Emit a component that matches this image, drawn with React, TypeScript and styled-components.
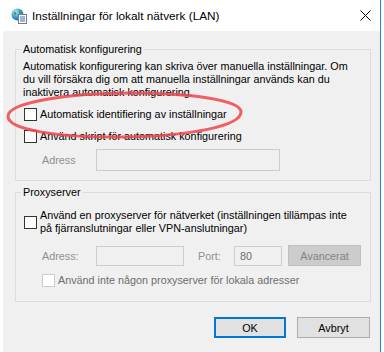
import React from "react";
import styled, { createGlobalStyle } from "styled-components";

const Global = createGlobalStyle`
  html, body { margin: 0; padding: 0; background: #ffffff; }
  body { font-family: "Liberation Sans", Arial, sans-serif; font-size: 10.8px; color: #000; }
  #root { width: 384px; height: 352px; overflow: hidden; }
`;

const Page = styled.div`
  position: relative;
  width: 384px;
  height: 352px;
`;

const Window = styled.div`
  margin-left: 3px;
  width: 377px;
  height: 352px;
  border-right: 1px solid #2f7fd6;
  display: flex;
  flex-direction: column;
`;

const TitleBar = styled.div`
  height: 31px;
  flex: none;
  background: #ffffff;
  display: flex;
  align-items: center;
  margin-left: -3px;
  padding-left: 11px;
  padding-right: 9px;
`;

const TitleText = styled.span`
  margin-left: 5px;
  font-size: 11.8px;
  color: #000;
  flex: 1;
  white-space: nowrap;
`;

const CloseBox = styled.div`
  width: 12px;
  height: 12px;
  display: flex;
  align-items: center;
  justify-content: center;
`;

const Body = styled.div`
  flex: 1;
  background: #f0f0f0;
  padding-top: 10px;
  display: flex;
  flex-direction: column;
`;

const Group = styled.fieldset<{ $top?: number; $bottom: number }>`
  margin: ${(p) => p.$top ?? 0}px 9px 0 12px;
  padding: 0 7px ${(p) => p.$bottom}px 7px;
  border: 1px solid #dcdcdc;
  min-width: 0;
`;

const Legend = styled.legend`
  padding: 0 2px;
  margin-left: -2px;
  line-height: 16px;
`;

const Desc = styled.div`
  margin-top: 3px;
  line-height: 13px;
  white-space: nowrap;
`;

const Line = styled.div``;

const CheckRow = styled.div<{ $indent?: number; $mt?: number; $disabled?: boolean }>`
  display: flex;
  align-items: center;
  min-height: 22px;
  margin-top: ${(p) => p.$mt ?? 0}px;
  padding-left: ${(p) => p.$indent ?? 1}px;
  color: ${(p) => (p.$disabled ? "#6d6d6d" : "#000")};
`;

const Box = styled.span<{ $disabled?: boolean }>`
  flex: none;
  box-sizing: border-box;
  width: 13px;
  height: 13px;
  background: #ffffff;
  border: 1px solid ${(p) => (p.$disabled ? "#cccccc" : "#333333")};
  margin-right: 3px;
`;

const Label = styled.span`
  line-height: 13px;
  white-space: nowrap;
`;

const FieldRow = styled.div<{ $mt: number }>`
  display: flex;
  align-items: center;
  margin-top: ${(p) => p.$mt}px;
`;

const FieldLabel = styled.span<{ $w: number; $ml?: number }>`
  width: ${(p) => p.$w}px;
  margin-left: ${(p) => p.$ml ?? 0}px;
  color: #8f8f8f;
  white-space: nowrap;
`;

const Input = styled.div<{ $w: number; $h: number }>`
  box-sizing: border-box;
  width: ${(p) => p.$w}px;
  height: ${(p) => p.$h}px;
  border: 1px solid #cccccc;
  background: #f0f0f0;
  color: #6d6d6d;
  padding-left: 5px;
  display: flex;
  align-items: center;
`;

const Button = styled.div<{ $w: number; $primary?: boolean; $disabled?: boolean; $ml?: number }>`
  box-sizing: border-box;
  width: ${(p) => p.$w}px;
  height: 21px;
  margin-left: ${(p) => p.$ml ?? 0}px;
  display: flex;
  align-items: center;
  justify-content: center;
  background: ${(p) => (p.$disabled ? "#cccccc" : "#e1e1e1")};
  border: ${(p) =>
    p.$primary ? "2px solid #0078d7" : p.$disabled ? "1px solid #bfbfbf" : "1px solid #adadad"};
  color: ${(p) => (p.$disabled ? "#838383" : "#000")};
`;

const Buttons = styled.div`
  display: flex;
  justify-content: flex-end;
  gap: 11px;
  margin-top: 15px;
  margin-right: 10px;
`;

const Annotation = styled.svg`
  position: absolute;
  left: 0;
  top: 0;
  pointer-events: none;
`;

function AppIcon() {
  return (
    <svg width="16" height="16" viewBox="0 0 16 16">
      <defs>
        <radialGradient id="g" cx="0.35" cy="0.3" r="0.8">
          <stop offset="0" stopColor="#bfe6ff" />
          <stop offset="0.6" stopColor="#2f8fd8" />
          <stop offset="1" stopColor="#1a5fa8" />
        </radialGradient>
      </defs>
      <circle cx="6.5" cy="6.5" r="6" fill="url(#g)" />
      <path d="M3 4 C5 3 6 5 5 7 C4 8 3 7 3 4Z M8 2 C10 3 11 5 9 6 C8 5 7 4 8 2Z M7 9 C9 8 11 9 10 11 C9 12 7 11 7 9Z" fill="#3aa84a" />
      <rect x="7.5" y="6.5" width="8" height="9" fill="#ffffff" stroke="#6a7f96" />
      <rect x="9" y="8.5" width="5" height="1" fill="#4a6e9a" />
      <rect x="9" y="10.5" width="5" height="1" fill="#4a6e9a" />
      <rect x="9" y="12.5" width="5" height="1" fill="#4a6e9a" />
    </svg>
  );
}

export default function App() {
  return (
    <Page>
      <Global />
      <Window>
        <TitleBar>
          <AppIcon />
          <TitleText>Inställningar för lokalt nätverk (LAN)</TitleText>
          <CloseBox>
            <svg width="11" height="11" viewBox="0 0 11 11">
              <path d="M0.5 0.5 L10.5 10.5 M10.5 0.5 L0.5 10.5" stroke="#000" strokeWidth="1" />
            </svg>
          </CloseBox>
        </TitleBar>
        <Body>
          <Group $bottom={9}>
            <Legend>Automatisk konfigurering</Legend>
            <Desc>
              <Line>Automatisk konfigurering kan skriva över manuella inställningar. Om</Line>
              <Line>du vill försäkra dig om att manuella inställningar används kan du</Line>
              <Line>inaktivera automatisk konfigurering.</Line>
            </Desc>
            <CheckRow $mt={4}>
              <Box />
              <Label>Automatisk identifiering av inställningar</Label>
            </CheckRow>
            <CheckRow>
              <Box />
              <Label>Använd skript för automatisk konfigurering</Label>
            </CheckRow>
            <FieldRow $mt={2}>
              <FieldLabel $ml={19} $w={54}>Adress</FieldLabel>
              <Input $w={184} $h={22} />
            </FieldRow>
          </Group>
          <Group $top={3} $bottom={10}>
            <Legend>Proxyserver</Legend>
            <CheckRow $mt={9}>
              <Box />
              <Label>
                <Line>Använd en proxyserver för nätverket (inställningen tillämpas inte</Line>
                <Line>på fjärranslutningar eller VPN-anslutningar)</Line>
              </Label>
            </CheckRow>
            <FieldRow $mt={10}>
              <FieldLabel $ml={19} $w={54}>Adress:</FieldLabel>
              <Input $w={88} $h={20} />
              <FieldLabel $ml={14} $w={36}>Port:</FieldLabel>
              <Input $w={48} $h={20}>80</Input>
              <Button $w={73} $disabled $ml={6}>Avancerat</Button>
            </FieldRow>
            <CheckRow $mt={3} $indent={19} $disabled>
              <Box $disabled />
              <Label>Använd inte någon proxyserver för lokala adresser</Label>
            </CheckRow>
          </Group>
          <Buttons>
            <Button $w={72} $primary>OK</Button>
            <Button $w={73}>Avbryt</Button>
          </Buttons>
        </Body>
      </Window>
      <Annotation width="384" height="352" viewBox="0 0 384 352">
        <path
          d="M 8 116 C 9 102, 70 93, 130 93 C 190 93, 241 100, 241 112 C 241 126, 190 136, 125 137 C 60 138, 7 130, 8 116 Z"
          fill="none"
          stroke="#f0454c"
          strokeOpacity="0.85"
          strokeWidth="3"
        />
      </Annotation>
    </Page>
  );
}
